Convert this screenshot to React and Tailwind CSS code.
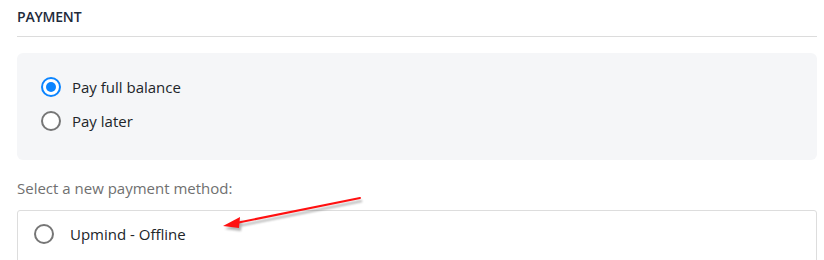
import React from "react";

function Radio({ checked }) {
  return checked ? (
    <span className="flex h-[20px] w-[20px] shrink-0 items-center justify-center rounded-full border-[2px] border-[#0b84ff] bg-white">
      <span className="h-[10px] w-[10px] rounded-full bg-[#0b84ff]" />
    </span>
  ) : (
    <span className="h-[20px] w-[20px] shrink-0 rounded-full border-[2px] border-[#767676] bg-white" />
  );
}

export default function App() {
  return (
    <div
      className="relative h-[260px] w-[824px] overflow-hidden bg-white text-[#212529]"
      style={{ fontFamily: '"Open Sans", "Noto Sans", sans-serif' }}
    >
      <div className="ml-[17px] w-[800px]">
        <div className="border-b border-[#dcdcdc] pt-[7px] pb-[9px]">
          <h2 className="text-[14px] font-semibold leading-[20px] tracking-[-0.2px] text-[#1e2a3b]">
            PAYMENT
          </h2>
        </div>
        <div className="mt-[16px] flex h-[107px] flex-col gap-[10px] rounded-[6px] bg-[#f5f6f8] pl-[24px] pt-[22px]">
          <label className="flex h-[24px] items-center gap-[11px] text-[15px]">
            <Radio checked />
            <span>Pay full balance</span>
          </label>
          <label className="flex h-[24px] items-center gap-[11px] text-[15px]">
            <Radio />
            <span>Pay later</span>
          </label>
        </div>
        <p className="mt-[18px] text-[15px] leading-[20px] text-[#707070]">
          Select a new payment method:
        </p>
        <div className="mt-[12px] flex h-[60px] items-start gap-[16px] rounded-[3px] border border-[#dddddd] pl-[16px] pt-[13px]">
          <Radio />
          <span className="text-[15px] leading-[20px]">Upmind - Offline</span>
        </div>
      </div>
      <svg
        className="pointer-events-none absolute left-0 top-0"
        width="824"
        height="260"
        viewBox="0 0 824 260"
      >
        <defs>
          <filter id="sh" x="-20%" y="-50%" width="140%" height="200%">
            <feGaussianBlur stdDeviation="1.2" />
          </filter>
        </defs>
        <g transform="translate(2,3)" opacity="0.45" filter="url(#sh)">
          <line x1="360" y1="198" x2="236" y2="223" stroke="#555" strokeWidth="2" />
          <polygon points="223,226 240,217 239,228" fill="#555" />
        </g>
        <line x1="360" y1="198" x2="236" y2="223" stroke="#ff1010" strokeWidth="2" strokeLinecap="round" />
        <polygon points="223,226 240,217 239,228" fill="#ff1010" />
      </svg>
    </div>
  );
}
